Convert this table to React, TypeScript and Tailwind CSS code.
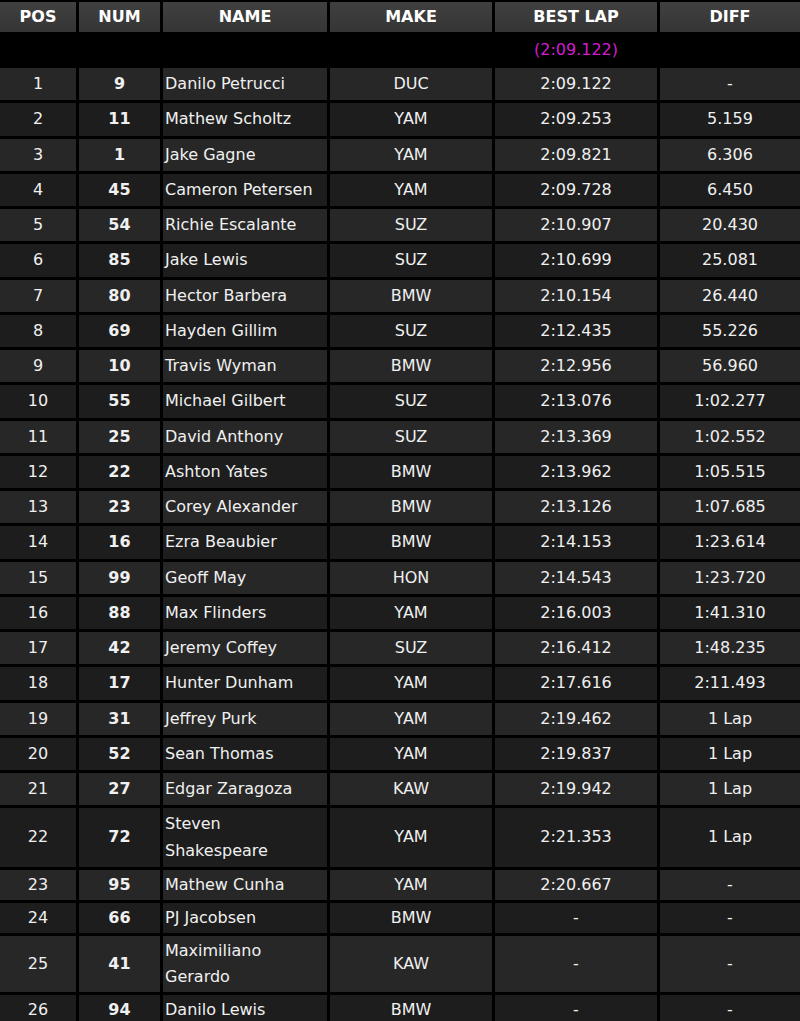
import React from "react";

type Row = { pos: number; num: string; name: string; make: string; lap: string; diff: string };

const ROWS: Row[] = [
  { pos: 1, num: "9", name: "Danilo Petrucci", make: "DUC", lap: "2:09.122", diff: "-" },
  { pos: 2, num: "11", name: "Mathew Scholtz", make: "YAM", lap: "2:09.253", diff: "5.159" },
  { pos: 3, num: "1", name: "Jake Gagne", make: "YAM", lap: "2:09.821", diff: "6.306" },
  { pos: 4, num: "45", name: "Cameron Petersen", make: "YAM", lap: "2:09.728", diff: "6.450" },
  { pos: 5, num: "54", name: "Richie Escalante", make: "SUZ", lap: "2:10.907", diff: "20.430" },
  { pos: 6, num: "85", name: "Jake Lewis", make: "SUZ", lap: "2:10.699", diff: "25.081" },
  { pos: 7, num: "80", name: "Hector Barbera", make: "BMW", lap: "2:10.154", diff: "26.440" },
  { pos: 8, num: "69", name: "Hayden Gillim", make: "SUZ", lap: "2:12.435", diff: "55.226" },
  { pos: 9, num: "10", name: "Travis Wyman", make: "BMW", lap: "2:12.956", diff: "56.960" },
  { pos: 10, num: "55", name: "Michael Gilbert", make: "SUZ", lap: "2:13.076", diff: "1:02.277" },
  { pos: 11, num: "25", name: "David Anthony", make: "SUZ", lap: "2:13.369", diff: "1:02.552" },
  { pos: 12, num: "22", name: "Ashton Yates", make: "BMW", lap: "2:13.962", diff: "1:05.515" },
  { pos: 13, num: "23", name: "Corey Alexander", make: "BMW", lap: "2:13.126", diff: "1:07.685" },
  { pos: 14, num: "16", name: "Ezra Beaubier", make: "BMW", lap: "2:14.153", diff: "1:23.614" },
  { pos: 15, num: "99", name: "Geoff May", make: "HON", lap: "2:14.543", diff: "1:23.720" },
  { pos: 16, num: "88", name: "Max Flinders", make: "YAM", lap: "2:16.003", diff: "1:41.310" },
  { pos: 17, num: "42", name: "Jeremy Coffey", make: "SUZ", lap: "2:16.412", diff: "1:48.235" },
  { pos: 18, num: "17", name: "Hunter Dunham", make: "YAM", lap: "2:17.616", diff: "2:11.493" },
  { pos: 19, num: "31", name: "Jeffrey Purk", make: "YAM", lap: "2:19.462", diff: "1 Lap" },
  { pos: 20, num: "52", name: "Sean Thomas", make: "YAM", lap: "2:19.837", diff: "1 Lap" },
  { pos: 21, num: "27", name: "Edgar Zaragoza", make: "KAW", lap: "2:19.942", diff: "1 Lap" },
  { pos: 22, num: "72", name: "Steven Shakespeare", make: "YAM", lap: "2:21.353", diff: "1 Lap" },
  { pos: 23, num: "95", name: "Mathew Cunha", make: "YAM", lap: "2:20.667", diff: "-" },
  { pos: 24, num: "66", name: "PJ Jacobsen", make: "BMW", lap: "-", diff: "-" },
  { pos: 25, num: "41", name: "Maximiliano Gerardo", make: "KAW", lap: "-", diff: "-" },
  { pos: 26, num: "94", name: "Danilo Lewis", make: "BMW", lap: "-", diff: "-" },
];

const COLS = "grid grid-cols-[76px_81px_164px_162px_162px_1fr] gap-x-[3px]";

export default function App() {
  return (
    <div
      className="min-h-screen w-[800px] overflow-hidden bg-black pt-[2px] text-[#f0f0f0]"
      style={{ fontFamily: '"DejaVu Sans", Verdana, sans-serif' }}
    >
      {/* header */}
      <div className={`${COLS} text-[16px] font-bold text-white`}>
        {["POS", "NUM", "NAME", "MAKE", "BEST LAP", "DIFF"].map((h) => (
          <div key={h} className="flex h-[30px] items-center justify-center bg-gradient-to-b from-[#404040] to-[#353535]">
            {h}
          </div>
        ))}
      </div>

      {/* fastest lap */}
      <div className={`${COLS} mt-[3px] h-[30px] items-center text-[16px] text-[#d21dd2]`}>
        <div />
        <div />
        <div />
        <div />
        <div className="text-center">(2:09.122)</div>
        <div />
      </div>

      <div className="mt-[3px] flex flex-col gap-y-[3px]">
        {ROWS.map((r) => {
          const bg = r.pos % 2 === 1 ? "bg-[#272727]" : "bg-[#1d1d1d]";
          const size = r.pos > 22 ? "py-[2px] leading-[26px]" : "py-[3px] leading-[26.25px]";
          const parts = r.name.split(" ");
          const twoLines = r.name.length > 17;
          return (
            <div key={r.pos} className={`${COLS} text-[16px]`}>
              <div className={`${bg} ${size} flex items-center justify-center`}>{r.pos}</div>
              <div className={`${bg} ${size} flex items-center justify-center font-bold`}>{r.num}</div>
              <div className={`${bg} ${size} flex items-center whitespace-nowrap px-[2px]`}>
                {twoLines ? (
                  <span>
                    {parts[0]}
                    <br />
                    {parts.slice(1).join(" ")}
                  </span>
                ) : (
                  r.name
                )}
              </div>
              <div className={`${bg} ${size} flex items-center justify-center`}>{r.make}</div>
              <div className={`${bg} ${size} flex items-center justify-center`}>{r.lap}</div>
              <div className={`${bg} ${size} flex items-center justify-center`}>{r.diff}</div>
            </div>
          );
        })}
      </div>
    </div>
  );
}
